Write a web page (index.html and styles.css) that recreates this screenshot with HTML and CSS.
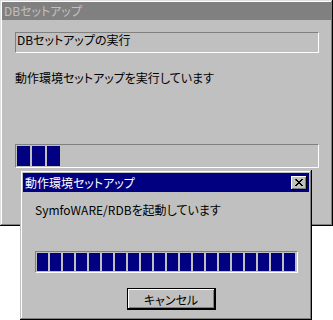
FILE: index.html
```html
<!DOCTYPE html>
<html lang="ja">

<head>
 <meta charset="UTF-8">
 <meta name="viewport" content="width=device-width, initial-scale=1.0">
 <title>DBセットアップ</title>

 <link rel="stylesheet" href="styles.css">

</head>

<body>

 <section class="window">
  <header class="titlebar inactive">DBセットアップ</header>
  <div class="window-body">
   <div class="field">DBセットアップの実行</div>
   <p class="status">動作環境セットアップを実行しています</p>
   <div class="progress big">
    <span></span><span></span><span></span>
   </div>
  </div>
 </section>

 <section class="dialog">
  <header class="titlebar active">
   <span>動作環境セットアップ</span>
   <button class="close" type="button" aria-label="閉じる">
    <svg width="8" height="7" viewBox="0 0 8 7">
     <path d="M0 0h2v1h1v1h2v-1h1v-1h2v1h-1v1h-1v1h-1v1h1v1h1v1h1v1h-2v-1h-1v-1h-2v1h-1v1h-2v-1h1v-1h1v-1h1v-1h-1v-1h-1z" fill="#000"/>
    </svg>
   </button>
  </header>
  <div class="dialog-body">
   <p class="status">SymfoWARE/RDBを起動しています</p>
   <div class="progress small" id="bar2"></div>
   <div class="actions">
    <button class="btn" type="button">キャンセル</button>
   </div>
  </div>
 </section>

 <script>
  const $bar2 = document.getElementById("bar2");
  for (let i = 0; i < 20; i++) {
   $bar2.appendChild(document.createElement("span"));
  }
 </script>

</body>

</html>
```

FILE: styles.css
```css
:root {
 --ui-font: "Noto Sans CJK JP", "Noto Sans", sans-serif;
 --face: #c0c0c0;
 --shadow: #808080;
 --navy: #000080;
}

html {
 box-sizing: border-box;
 font-size: 12px;
 font-family: var(--ui-font);
 font-feature-settings: "palt";
}

*,
*::before,
*::after {
 box-sizing: inherit;
}

body {
 margin: 0;
 background: #fff;
 position: relative;
 width: 333px;
 height: 320px;
 overflow: hidden;
}

/* - - - ventana principal - - - */
.window {
 width: 333px;
 height: 226px;
 padding: 2px;
 background: var(--face);
 box-shadow: inset -1px -1px #000, inset 1px 1px #dfdfdf,
  inset -2px -2px var(--shadow), inset 2px 2px #fff;
}

.titlebar {
 height: 18px;
 line-height: 18px;
 padding-left: 2px;
 white-space: nowrap;
}

.titlebar.inactive {
 background: var(--shadow);
 color: var(--face);
}

.window-body {
 padding: 12px 0 0 13px;
}

.field {
 width: 304px;
 height: 21px;
 line-height: 12px;
 padding: 1px 0 0 1px;
 border-top: 1px solid var(--shadow);
 border-left: 1px solid var(--shadow);
 border-bottom: 1px solid #fff;
 border-right: 1px solid #fff;
}

.status {
 margin: 0;
 line-height: 12px;
}

.window-body .status {
 margin-top: 19px;
}

.progress {
 display: flex;
 gap: 2px;
 padding: 1px;
 border-top: 1px solid var(--shadow);
 border-left: 1px solid var(--shadow);
 border-bottom: 1px solid #fff;
 border-right: 1px solid #fff;
}

.progress span {
 background: var(--navy);
}

.progress.big {
 width: 304px;
 height: 24px;
 margin-top: 60px;
}

.progress.big span {
 width: 13px;
}

.progress.small {
 width: 263px;
 height: 22px;
 margin-top: 35px;
}

.progress.small span {
 width: 11px;
}

/* - - - dialogo - - - */
.dialog {
 position: absolute;
 left: 20px;
 top: 170px;
 width: 292px;
 height: 150px;
 padding: 3px;
 background: var(--face);
 box-shadow: inset -1px -1px #000, inset 1px 1px var(--face),
  inset -2px -2px var(--shadow), inset 2px 2px #fff;
}

.titlebar.active {
 display: flex;
 align-items: center;
 justify-content: space-between;
 height: 19px;
 background: var(--navy);
 color: #fff;
 padding-right: 2px;
}

.close {
 display: flex;
 align-items: center;
 justify-content: center;
 width: 16px;
 height: 14px;
 padding: 0;
 border: 0;
 background: var(--face);
 box-shadow: inset -1px -1px #000, inset 1px 1px #fff,
  inset -2px -2px var(--shadow);
}

.dialog-body {
 padding: 12px 0 0 12px;
}

.actions {
 display: flex;
 justify-content: center;
 margin-top: 15px;
 padding-right: 2px;
}

.btn {
 width: 89px;
 height: 22px;
 padding: 0;
 font: inherit;
 font-size: 12px;
 color: #000;
 background: var(--face);
 border: 1px solid #000;
 box-shadow: inset -1px -1px #000, inset 1px 1px #fff,
  inset -2px -2px var(--shadow);
}
```
